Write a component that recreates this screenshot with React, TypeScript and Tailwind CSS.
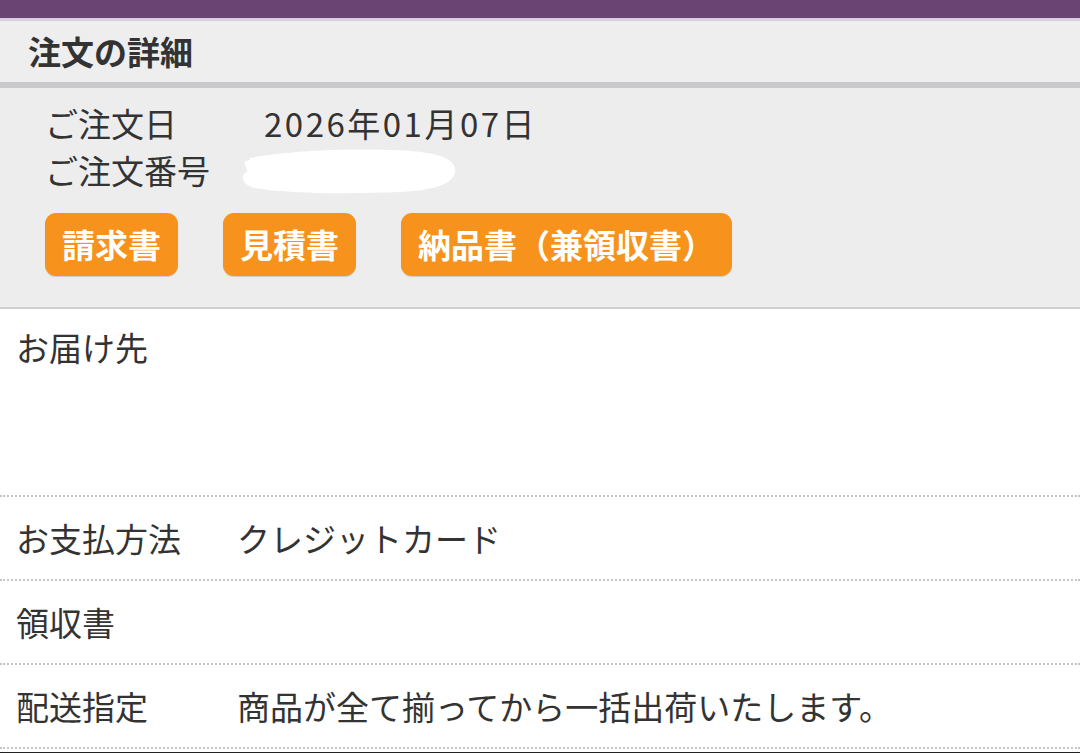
import React from 'react';

const rows = [
  { label: 'お支払方法', value: 'クレジットカード' },
  { label: '領収書', value: '' },
  { label: '配送指定', value: '商品が全て揃ってから一括出荷いたします。' },
];

const docs = ['請求書', '見積書', '納品書（兼領収書）'];

// white scribble that hides the order number
function Redacted() {
  return (
    <svg width="220" height="50" viewBox="0 0 220 50" className="-ml-[24px]">
      <path
        d="M4 16 C30 6 90 2 150 4 C190 5 212 10 215 22 C217 34 204 44 160 46 C110 48 50 48 14 42 C2 38 0 30 6 26 C20 20 70 18 110 22 C80 24 30 28 10 32 Z"
        fill="#ffffff"
      />
      <path d="M10 12 C40 6 80 5 120 8 C90 12 40 14 10 18 Z" fill="#ffffff" />
    </svg>
  );
}

export default function App() {
  return (
    <div className="w-[1080px] h-[753px] overflow-hidden bg-white text-[#333333] font-['Noto_Sans_CJK_JP',sans-serif]">
      {/* top app bar */}
      <div className="h-[18px] bg-[#6a4573]" />
      <div className="h-[3px] bg-[#d8d0de]" />

      {/* section title */}
      <div className="h-[61px] bg-[#eeeeee] flex items-center pl-[28px] text-[33px] font-bold leading-none">
        注文の詳細
      </div>
      <div className="h-[6px] bg-[#c9c9cb]" />

      {/* order summary */}
      <div className="h-[219px] bg-[#ededed] pl-[45px] pt-[12px]">
        <div className="flex items-center h-[47px] text-[33px] leading-none">
          <span className="w-[219px]">ご注文日</span>
          <span className="tracking-[2.5px]">2026年01月07日</span>
        </div>
        <div className="flex items-center h-[47px] text-[33px] leading-none">
          <span className="w-[219px]">ご注文番号</span>
          <Redacted />
        </div>
        <div className="flex gap-[45px] mt-[19px]">
          {docs.map((d) => (
            <button
              key={d}
              className="h-[63px] px-[17px] rounded-[11px] bg-[#f7931c] text-white text-[33px] font-bold leading-none shadow-[0_1px_1px_rgba(0,0,0,0.15)]"
            >
              {d}
            </button>
          ))}
        </div>
      </div>
      <div className="h-[2px] bg-[#cfcfcf]" />

      {/* delivery address */}
      <div className="h-[186px] pl-[16px] pt-[15px] text-[33px] leading-[47px]">お届け先</div>

      {rows.map((r) => (
        <div
          key={r.label}
          className="h-[84px] border-t-2 border-dotted border-[#c4c4c4] flex items-center pl-[16px] text-[33px] leading-none"
        >
          <span className="w-[221px]">{r.label}</span>
          <span>{r.value}</span>
        </div>
      ))}
      <div className="border-t-2 border-dotted border-[#c4c4c4]" />
      <div className="mt-[3px] h-[2px] bg-[#222222]" />
    </div>
  );
}
